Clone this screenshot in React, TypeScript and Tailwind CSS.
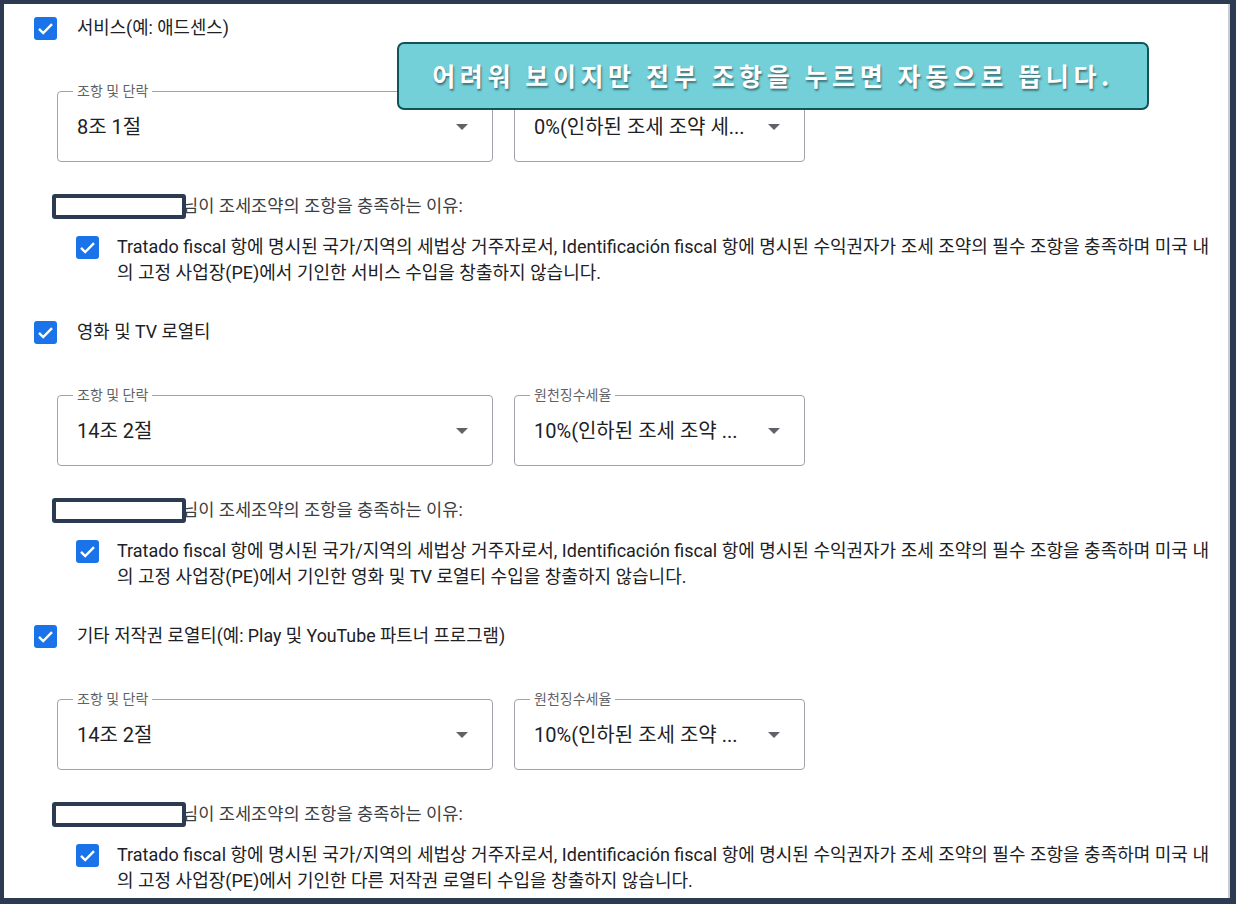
const font = "font-['Roboto','Noto_Sans_CJK_KR',sans-serif]";

function Check({ className = "" }: { className?: string }) {
  return (
    <svg width="23" height="23" viewBox="0 0 23 23" className={className}>
      <rect x="0" y="0" width="23" height="23" rx="3" fill="#1a73e8" />
      <path d="M5 11.8l4.2 4.2L18 7.2" fill="none" stroke="#fff" strokeWidth="2.4" />
    </svg>
  );
}

function Caret() {
  return (
    <svg width="12" height="6" viewBox="0 0 12 6">
      <path d="M0 0h12L6 6z" fill="#5f6368" />
    </svg>
  );
}

interface SelectProps {
  label: string;
  value: string;
  width: string;
}

function Select({ label, value, width }: SelectProps) {
  return (
    <div className={`relative h-[71px] ${width} rounded-[4px] border border-[#a0a4a8] flex items-center pl-[19px] pr-[24px]`}>
      <span className="absolute -top-[11px] left-[15px] bg-white px-[4px] text-[14px] leading-[20px] text-[#5f6368]">
        {label}
      </span>
      <span className="flex-1 text-[20px] text-[#202124] whitespace-nowrap overflow-hidden">{value}</span>
      <Caret />
    </div>
  );
}

interface SectionProps {
  title: string;
  article: string;
  rate: string;
  income: string;
}

function Section({ title, article, rate, income }: SectionProps) {
  return (
    <div className="flex flex-col">
      <div className="flex items-center h-[24px]">
        <Check />
        <span className="ml-[20px] text-[17.8px] text-[#202124]">{title}</span>
      </div>

      <div className="flex gap-[21px] mt-[51px] ml-[23px]">
        <Select label="조항 및 단락" value={article} width="w-[436px]" />
        <Select label="원천징수세율" value={rate} width="w-[291px]" />
      </div>

      <div className="flex items-center mt-[32px] ml-[18px] h-[25px]">
        <div className="relative z-10 w-[134px] h-[25px] rounded-[3px] border-[4px] border-[#2c3a52] bg-white" />
        <span className="ml-[-4px] text-[17.6px] text-[#3c4043]">님이 조세조약의 조항을 충족하는 이유:</span>
      </div>

      <div className="flex items-start mt-[15px] ml-[42px]">
        <Check className="mt-[2px] shrink-0" />
        <p className="ml-[18px] text-[18px] leading-[26px] text-[#202124] whitespace-nowrap">
          Tratado fiscal 항에 명시된 국가/지역의 세법상 거주자로서, Identificación fiscal 항에 명시된 수익권자가 조세 조약의 필수 조항을 충족하며 미국 내
          <br />
          의 고정 사업장(PE)에서 기인한 {income} 수입을 창출하지 않습니다.
        </p>
      </div>
    </div>
  );
}

export default function App() {
  return (
    <div className={`${font} w-[1236px] h-[904px] overflow-hidden bg-white`}>
      <div className="relative w-full h-full border-l-[4px] border-t-[4px] border-r-[6px] border-b-[6px] border-[#2c3a52] overflow-hidden">
        <div className="absolute right-0 top-0 bottom-0 w-[2px] bg-[#c9ccd1]" />
        <div className="flex flex-col gap-[34px] pl-[30px] pt-[12px]">
          <Section title="서비스(예: 애드센스)" article="8조 1절" rate="0%(인하된 조세 조약 세..." income="서비스" />
          <Section title="영화 및 TV 로열티" article="14조 2절" rate="10%(인하된 조세 조약 ..." income="영화 및 TV 로열티" />
          <Section
            title="기타 저작권 로열티(예: Play 및 YouTube 파트너 프로그램)"
            article="14조 2절"
            rate="10%(인하된 조세 조약 ..."
            income="다른 저작권 로열티"
          />
        </div>

        {/* callout */}
        <div className="absolute left-[393px] top-[38px] w-[752px] h-[68px] rounded-[7px] border-2 border-[#0e5459] bg-[#73cfd8] flex items-center justify-center">
          <span className="font-['Noto_Sans_CJK_KR',sans-serif] font-bold text-[25px] tracking-[4.6px] text-white [text-shadow:1px_2px_2px_rgba(0,0,0,0.45)]">
            어려워 보이지만 전부 조항을 누르면 자동으로 뜹니다.
          </span>
        </div>
      </div>
    </div>
  );
}
